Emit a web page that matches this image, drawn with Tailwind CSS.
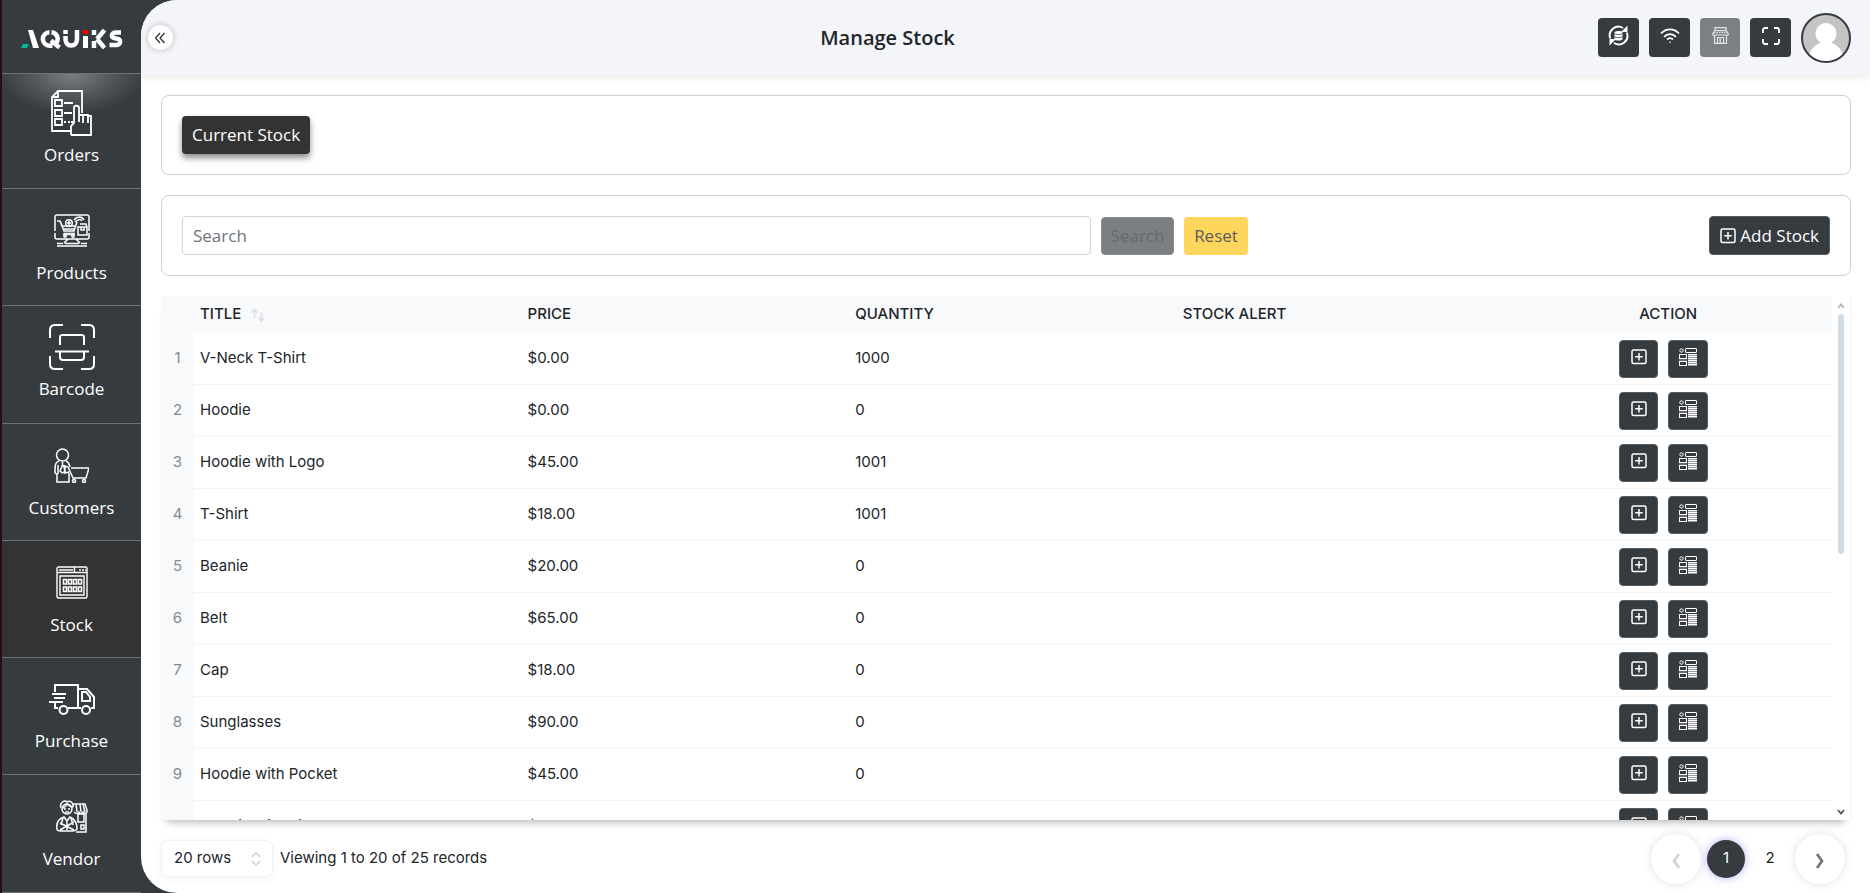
<!DOCTYPE html>
<html lang="en">
<head>
<meta charset="utf-8">
<title>Manage Stock</title>
<script src="https://cdn.jsdelivr.net/npm/@tailwindcss/browser@4"></script>
</head>
<body class="h-screen overflow-hidden bg-[#363b3f] font-['Open_Sans',sans-serif] text-[#212529]">
<svg class="hidden" aria-hidden="true">
  <symbol id="plus-square" viewBox="0 0 16 16"><rect x="1" y="1" width="14" height="13.5" rx="1.5" fill="none" stroke="currentColor" stroke-width="1.5"/><path d="M8 4v7.5M4.2 7.8h7.6" fill="none" stroke="currentColor" stroke-width="1.5"/></symbol>
  <symbol id="details" viewBox="0 0 18 18"><g fill="none" stroke="currentColor" stroke-width="1"><circle cx="2.500" cy="2.500" r="1.700"/><rect x="6.500" y=".5" width="11" height="4" rx=".5"/><rect x=".5" y="6.500" width="7" height="4"/><rect x=".5" y="13.500" width="7" height="4"/><path d="M0 12h8" stroke-opacity=".5"/><path d="M9 6.500h9M9 8.500h9M9 10.500h9M9 12.500h9M9 14.500h9M9 16.500h9"/><path d="M9 7.500h9M9 9.500h9M9 11.500h9M9 13.500h9M9 15.500h9M9 17.500h9" stroke-opacity=".5"/></g></symbol>
</svg>
<div class="flex h-full">
  <nav class="flex w-[141px] shrink-0 flex-col overflow-hidden border-l-2 border-[#2a0a18] text-white" aria-label="Main">
    <a href="#" aria-label="Aquiks" class="flex h-[73px] shrink-0 items-center justify-center pt-1">
      <svg class="h-5 w-[102px]" viewBox="0 0 102 20">
        <path d="M7 1h5l6 18h-6z" fill="#fff"/>
        <path d="M2 15h6l-2 4H0z" fill="#00b894"/>
        <g fill="none" stroke="#fff" stroke-width="4.500">
          <path d="M28.500 3.300a6.700 6.700 0 0 0 0 13.400h3M30.500 3.300a6.700 6.700 0 0 1 4.500 11M30 11.500l8.500 7"/>
          <path d="M44.500 7v3c0 4 2 6.500 5.700 6.500s5.800-2.500 5.800-6.500V1M44.500 1v4"/>
          <path d="M73 1v5M73 12v7M76 10l7.500-9M76 10l7.500 9"/>
          <path d="M100 3.500h-5c-5.500 0-5.500 6 0 6s5.500 6.500 0 6.500h-6.500"/>
        </g>
        <path d="M62 7h5v12h-5z" fill="#fff"/>
        <path d="M62 1h5v4h-5z" fill="#f00"/>
      </svg>
    </a>
    <a href="#" class="flex h-[116px] shrink-0 flex-col items-center border-y border-[#6b7278] bg-[radial-gradient(ellipse_75px_40px_at_50%_0,#7c8083,#55595d_50%,transparent)] pt-4">
      <svg class="h-[46px] w-[44px]" viewBox="0 0 44 46" fill="none" stroke="currentColor" stroke-width="1.8"><path d="M21 41H2V7l6-6h24v22M2 7h6V1M5 10h7v6H5zM5 20h7v6H5zM5 29h7v6H5zM14 13h9M14 23h8M14 32h2m2 0h2m1 0h2"/><path d="M21 45V36l3-3V18c0-3 5-3 5 0v14M29 25h4v8M33 25h5v8M37 26h4v19H21"/></svg>
      <span class="mt-[5px] text-[17px] leading-7">Orders</span>
    </a>
    <a href="#" class="flex h-[117px] shrink-0 flex-col items-center border-b border-[#6b7278] pt-[25px]">
      <svg class="h-[33px] w-[36px]" viewBox="0 0 36 33" fill="none" stroke="currentColor" stroke-width="1.500"><path d="M1 17V3c0-1 1-2 2-2h30c1 0 2 1 2 2v14M1 19v4c0 1 1 2 2 2h30c1 0 2-1 2-2v-4M14 25l-4 4M22 25l4 4M3 29.500h6M11 29.500h14M27 29.500h6M3 32h30"/><path d="M3 7h3l4 10h10l3-9M7 9l3 8M9 12h12M10 15h11M9 20h12"/><path d="M10 18.500h11v3H10z" fill="currentColor" fill-opacity=".6" stroke="none"/><circle cx="11" cy="22" r="1.200"/><circle cx="19" cy="22" r="1.200"/><circle cx="15" cy="9" r="3.300"/><path d="M15 7v4M13 9h4M24 13h9v8h-9zM26 10h6l1 3M27 13v3h3v-3M20 6c3-4 8-4 10 0M21 8c3-3 6-3 7-1"/></svg>
      <span class="mt-3 text-[17px] leading-7">Products</span>
    </a>
    <a href="#" class="flex h-[118px] shrink-0 flex-col items-center border-b border-[#6b7278] pt-[18px]">
      <svg class="h-[46px] w-[46px]" viewBox="0 0 46 46" fill="none" stroke="currentColor" stroke-width="2"><path d="M1 14V6c0-3 2-5 5-5h8M32 1h8c3 0 5 2 5 5v8M45 32v8c0 3-2 5-5 5h-8M14 45H6c-3 0-5-2-5-5v-8M11 21V13c0-2 1-2 3-2h18c2 0 3 0 3 2v8M6 27.500h34M11 28v5c0 2 1 3 3 3h18c2 0 3-1 3-3v-5"/></svg>
      <span class="mt-[5px] text-[17px] leading-7">Barcode</span>
    </a>
    <a href="#" class="flex h-[117px] shrink-0 flex-col items-center border-b border-[#6b7278] pt-6">
      <svg class="h-[35px] w-[35px]" viewBox="0 0 35 35" fill="none" stroke="currentColor" stroke-width="1.500"><circle cx="8.500" cy="7" r="6"/><path d="M5 13c-4 1-4 5-4 10 0 3 2 3 2 3v8h12v-9M4 17v9M8.500 14v3L6 23l2.500 2 2.500-2-1.500-6M12 13c3 1 3 3 4 6M17 20h18l-3 10H19l-5-11-3-1v7l4-1"/><circle cx="20" cy="33" r="1.500"/><circle cx="30" cy="33" r="1.500"/></svg>
      <span class="mt-[11px] text-[17px] leading-7">Customers</span>
    </a>
    <a href="#" aria-current="page" class="flex h-[117px] shrink-0 flex-col items-center border-b border-[#6b7278] bg-[#333] pt-[25px]">
      <svg class="h-[33px] w-[32px]" viewBox="0 0 32 33" fill="none" stroke="currentColor" stroke-width="1.400"><rect x="1" y="1" width="30" height="31" rx="1.500"/><path d="M1 6.500h30M18.500 1v5M23 4h2m1 0h2m1 0h1M3 4h14"/><path d="M4 29V10h24v19z"/><g stroke-width="1.600"><path d="M7.500 13.500h3v4.500h-3zM12.500 13.500h3v4.500h-3zM17.500 13.500h3v4.500h-3zM22.500 13.500h3v4.500h-3zM7.500 21h3v4.500h-3zM12.500 21h3v4.500h-3zM17.500 21h3v4.500h-3zM22.500 21h3v4.500h-3z"/></g></svg>
      <span class="mt-3 text-[17px] leading-7">Stock</span>
    </a>
    <a href="#" class="flex h-[117px] shrink-0 flex-col items-center border-b border-[#6b7278] pt-[25px]">
      <svg class="h-[32px] w-[46px]" viewBox="0 0 46 32" fill="none" stroke="currentColor" stroke-width="2"><path d="M6 9V2h23v23H19M9 25H6v-5M3 11h14M5 15h11M0 19h14M29 6h9l7 8v11h-3M32 25h-3M33 9h4l4 5v4h-8z"/><circle cx="14.500" cy="27" r="4"/><circle cx="37" cy="27" r="4"/></svg>
      <span class="mt-3 text-[17px] leading-7">Purchase</span>
    </a>
    <a href="#" class="flex h-[118px] shrink-0 flex-col items-center border-b border-[#6b7278] pt-[25px]">
      <svg class="h-[33px] w-[32px]" viewBox="0 0 32 33" fill="none" stroke="currentColor" stroke-width="1.500"><path d="M16 4h13l2 6v2c-1 2-3 2-4 0-1 2-3 2-4 0-1 2-3 2-5 0M20 4l1 8M24 4l1 8M27 4l2 8M30 13v19H20M22 14h6v8h-6z"/><circle cx="11" cy="9" r="5"/><path d="M5 8C3 2 9 0 11 2c3-2 7 1 6 5M6 8c3 0 4-2 5-4 2 2 4 3 6 3M8 9h2m2 0h2M9 12h4M1 29c-1-6 1-10 7-12l3 4 3-4c5 2 7 6 7 12-1 2-3 2-5 2H5c-2 0-4 0-4-2zM4 23l14 7M4 30l14-8M11 21v9M7 18l-2 7M15 18l2 7"/><path d="M25 25h3v4h-3z"/></svg>
      <span class="mt-3 text-[17px] leading-7">Vendor</span>
    </a>
  </nav>

  <main class="flex min-w-0 flex-1 flex-col overflow-hidden rounded-l-[36px] bg-white">
    <header class="flex h-[75px] shrink-0 items-center rounded-br-lg bg-[#f4f5fa] pr-[19px] pl-[7px] shadow-[0_2px_8px_rgba(0,0,0,0.1)]">
      <div class="flex flex-3">
        <button aria-label="Collapse menu" class="flex size-[25px] items-center justify-center rounded-full bg-white pr-0.5 shadow-[0_0_6px_rgba(0,0,0,0.25)]"><svg class="size-3" viewBox="0 0 12 12" fill="none" stroke="#333" stroke-width="1.300"><path d="M6 1 1.500 6 6 11M10.500 1 6 6l4.500 5"/></svg></button>
      </div>
      <h1 class="text-xl font-semibold">Manage Stock</h1>
      <div class="flex flex-4 items-center justify-end gap-2.5">
        <button aria-label="Sync" class="flex h-[39px] w-[41px] items-center justify-center rounded bg-[#363b3f] pb-1 text-white"><svg class="size-[21px]" viewBox="0 0 21 21" fill="none" stroke="currentColor" stroke-width="1.900"><path d="M2.300 13.500A8.700 8.700 0 0 1 15 3M18.800 7.500A8.700 8.700 0 0 1 6 18"/><path d="M19.500.5v6.500H13zM1.500 20.500V14H8z" fill="currentColor" stroke="none"/><path d="M6.500 7.500c0-2 8-2 8 0v6.500c0 2-8 2-8 0z" fill="currentColor" stroke="none"/><path d="M6.500 8.800c2 1 6 1 8 0M6.500 11.800c2 1 6 1 8 0" stroke="#363b3f" stroke-width=".8"/></svg></button>
        <button aria-label="Network" class="flex h-[39px] w-[41px] items-center justify-center rounded bg-[#363b3f] pb-1 text-white"><svg class="h-4 w-5" viewBox="0 0 20 16" fill="none" stroke="currentColor" stroke-width="1.700"><path d="M1 5.500c5-5.500 13-5.500 18 0M4 8.800c3.500-3.700 8.500-3.700 12 0M7 11.500c2-1.800 4-1.800 6 0"/><circle cx="10" cy="14.300" r=".8" fill="currentColor" stroke="none"/></svg></button>
        <button disabled aria-label="Store" class="flex h-[39px] w-10 items-center justify-center rounded bg-[#7c7f83] pb-1 text-[#e4e5e7]"><svg class="size-[17px]" viewBox="0 0 17 17" fill="none" stroke="currentColor" stroke-width="1.200"><path d="M3 .6h11v3H3zM3 3.500.8 6.500v1.500h15.400V6.500L14 3.500M2.500 8v8.400h12V8M5.500 16V10.500h2.700V16M11.500 16v-5.500H9"/><path d="M2 5.700h13" stroke-dasharray="1.500 1"/></svg></button>
        <button aria-label="Full screen" class="flex h-[39px] w-[41px] items-center justify-center rounded bg-[#363b3f] pb-1 text-white"><svg class="size-[18px]" viewBox="0 0 18 18" fill="none" stroke="currentColor" stroke-width="1.800"><path d="M1 6V3c0-1 1-2 2-2h3M12 1h3c1 0 2 1 2 2v3M17 12v3c0 1-1 2-2 2h-3M6 17H3c-1 0-2-1-2-2v-3"/></svg></button>
        <button aria-label="Account" class="size-[50px] overflow-hidden rounded-full border-2 border-[#363b3f] bg-[#c4c4c4]"><svg viewBox="0 0 46 46" fill="#fff"><ellipse cx="23" cy="18.500" rx="10.500" ry="10.500"/><path d="M18 25h10l1 3c5 2 9 6 11 12-4 5-10 7-17 7s-13-2-17-7c2-6 6-10 11-12z"/></svg></button>
      </div>
    </header>

    <div class="flex min-h-0 flex-1 flex-col pt-5 pr-[19px] pl-5">
      <section class="shrink-0 rounded-lg border border-[#ced0d2] p-5">
        <button class="block h-[38px] rounded bg-[#333] px-2.5 text-[17px] text-white shadow-[0_4px_6px_rgba(0,0,0,0.45)]">Current Stock</button>
      </section>
      <form class="mt-5 flex shrink-0 items-center rounded-lg border border-[#ced0d2] p-5" onsubmit="return false">
        <input type="search" aria-label="Search" placeholder="Search" class="h-[39px] min-w-0 flex-[0_1_909px] rounded border border-[#ced4da] px-2.5 text-[17px] placeholder:text-[#6c757d]">
        <button disabled class="ml-2.5 h-[38px] w-[73px] rounded border border-[#868d93] bg-[#7b7f82] text-[17px] text-[#66696c]">Search</button>
        <button type="reset" class="ml-2.5 h-[38px] w-16 rounded bg-[#ffd65c] text-[17px] text-[#5b5b5b]">Reset</button>
        <button type="button" class="ml-auto flex h-[39px] items-center gap-1 rounded border border-[#545c63] bg-[#363b3f] px-2.5 text-[17px] text-white"><svg class="size-4"><use href="#plus-square"/></svg>Add Stock</button>
      </form>

      <div class="mt-5 flex min-h-0 flex-1 border-r border-[#f3f4f6] font-[Inter,sans-serif] text-[15px] shadow-[0_8px_8px_-6px_rgba(0,0,0,0.3)]">
        <div class="min-w-0 flex-1 overflow-y-auto [scrollbar-width:none]">
          <table class="w-full table-fixed border-separate border-spacing-0">
            <thead class="sticky top-0 bg-[#f8f9fb] text-left">
              <tr class="h-[37px] *:font-medium">
                <th class="w-[33px]"></th>
                <th class="px-1.5"><button class="flex items-center gap-2.5">TITLE <svg class="size-3.5" viewBox="0 0 14 14" fill="none" stroke="#d9dce0" stroke-width="1.600"><path d="M3.500 10V2M.8 4.500l2.700-3 2.700 3M10.500 4.500v8M7.800 10l2.700 3 2.700-3"/></svg></button></th>
                <th class="px-1.5">PRICE</th>
                <th class="px-1.5">QUANTITY</th>
                <th class="px-1.5">STOCK ALERT</th>
                <th class="text-center">ACTION</th>
              </tr>
            </thead>
            <tbody id="rows"></tbody>
          </table>
        </div>
        <div class="flex w-[18px] shrink-0 flex-col items-center pt-1.5 pb-1" aria-hidden="true">
          <svg class="h-2 w-2" viewBox="0 0 8 8" fill="none" stroke="#b4b4b4" stroke-width="1.800"><path d="m1 6 3-3.500L7 6"/></svg>
          <div class="mt-1 h-60 w-1.5 rounded-full bg-[#d1dce5]"></div>
          <svg class="mt-auto h-2 w-2" viewBox="0 0 8 8" fill="none" stroke="#555" stroke-width="1.800"><path d="m1 2 3 3.500L7 2"/></svg>
        </div>
      </div>

      <footer class="flex h-[73px] shrink-0 items-center font-[Inter,sans-serif] text-[15px]">
        <div class="relative mt-1">
          <select aria-label="Rows per page" class="h-[37px] w-28 appearance-none rounded-md border border-[#f1f1f1] bg-white pl-3 shadow-[0_2px_8px_rgba(0,0,0,0.05)]"><option>20 rows</option></select>
          <svg class="pointer-events-none absolute top-3 right-3 h-3.5 w-2.5" viewBox="0 0 10 14" fill="none" stroke="#d0d0d0" stroke-width="1.500"><path d="m.8 5 4.200-4 4.200 4M.8 9 5 13l4.200-4"/></svg>
        </div>
        <p class="mt-1 ml-[7px]">Viewing 1 to 20 of 25 records</p>
        <div class="mt-1 mr-1.5 ml-auto flex items-center">
          <button disabled aria-label="Previous page" class="flex size-[50px] items-center justify-center rounded-full bg-white pt-1 shadow-[0_0_10px_rgba(0,0,0,0.12)]"><svg class="h-4 w-2" viewBox="0 0 8 16" fill="none" stroke="#d4d4d4" stroke-width="2.800"><path d="M7 1 2 8l5 7"/></svg></button>
          <button aria-current="page" class="ml-1.5 size-[38px] rounded-full bg-[#363b3f] text-white shadow-[0_0_8px_rgba(110,100,240,0.5)]">1</button>
          <button class="ml-1.5 size-[38px] rounded-full">2</button>
          <button aria-label="Next page" class="ml-1.5 flex size-[50px] items-center justify-center rounded-full bg-white pt-1 shadow-[0_0_10px_rgba(0,0,0,0.12)]"><svg class="h-4 w-2" viewBox="0 0 8 16" fill="none" stroke="#777" stroke-width="2.800"><path d="m1 1 5 7-5 7"/></svg></button>
        </div>
      </footer>
    </div>
  </main>
</div>
<script>
const items = [
  ['V-Neck T-Shirt', '$0.00', '1000'], ['Hoodie', '$0.00', '0'], ['Hoodie with Logo', '$45.00', '1001'],
  ['T-Shirt', '$18.00', '1001'], ['Beanie', '$20.00', '0'], ['Belt', '$65.00', '0'], ['Cap', '$18.00', '0'],
  ['Sunglasses', '$90.00', '0'], ['Hoodie with Pocket', '$45.00', '0'], ['Hoodie with Zipper', '$45.00', '0']
];
document.getElementById('rows').innerHTML = items.map(([title, price, qty], i) => `
  <tr class="h-[52px] *:border-b *:border-[#f4f5f6]">
    <td class="bg-[#f8f9fb] text-center text-[#85898e]">${i + 1}</td>
    <td class="px-1.5">${title}</td><td class="px-1.5">${price}</td><td class="px-1.5">${qty}</td><td></td>
    <td><div class="flex justify-center gap-2.5 pr-[9px]">
      <button aria-label="Add stock to ${title}" class="flex h-[38px] w-[39px] items-center justify-center rounded border border-[#545c63] bg-[#363b3f] pb-1 text-white"><svg class="size-4"><use href="#plus-square"/></svg></button>
      <button aria-label="Details of ${title}" class="flex h-[38px] w-10 items-center justify-center rounded border border-[#545c63] bg-[#363b3f] pb-1 text-white"><svg class="size-[18px]"><use href="#details"/></svg></button>
    </div></td>
  </tr>`).join('');
</script>
</body>
</html>
